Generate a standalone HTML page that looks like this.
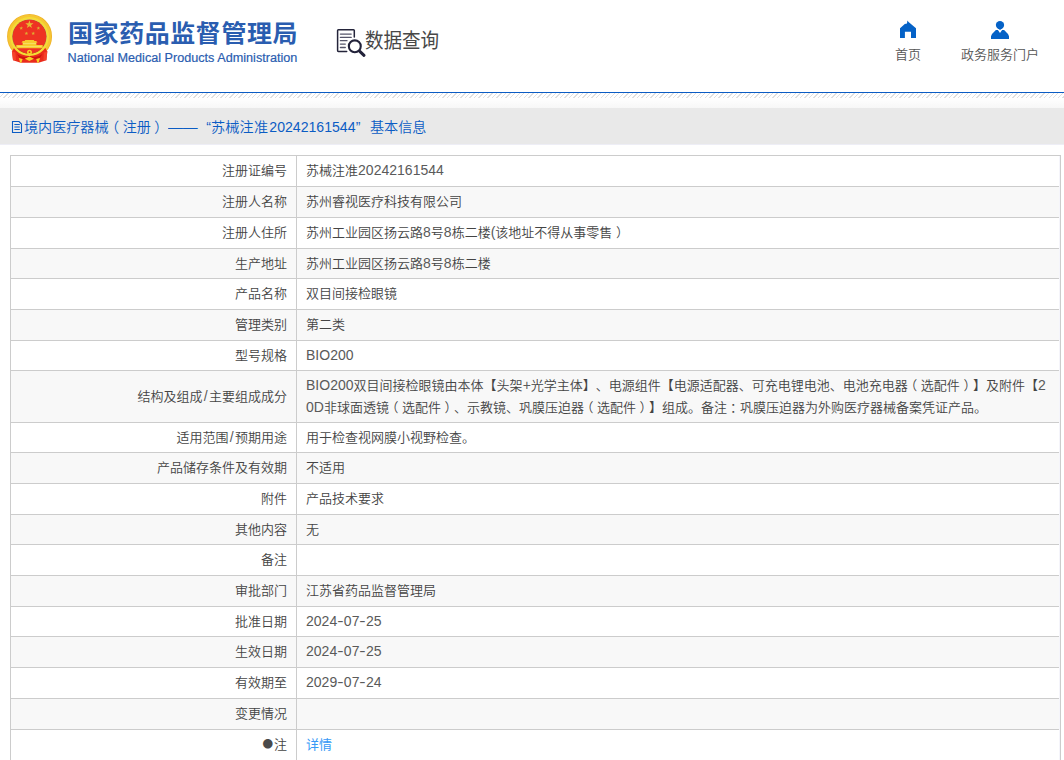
<!DOCTYPE html>
<html lang="zh-CN">
<head>
<meta charset="utf-8">
<title>国家药品监督管理局 数据查询</title>
<style>
html,body{margin:0;padding:0;background:#fff;}
body{width:1064px;height:760px;overflow:hidden;position:relative;font-family:"Liberation Sans","Noto Sans CJK SC","WenQuanYi Zen Hei",sans-serif;font-size:13px;font-weight:350;color:#444;text-spacing-trim:space-all;}
.abs{position:absolute;}
.cj{font-family:"Noto Sans CJK SC","WenQuanYi Zen Hei",sans-serif;}
#logo-cn{left:68px;top:14.3px;font-size:25px;font-weight:bold;color:#2a5db0;line-height:38px;white-space:nowrap;letter-spacing:0.57px;transform:scaleY(0.962);transform-origin:0 50%;}
#logo-en{left:67.6px;top:50.2px;font-size:12.65px;-webkit-text-stroke:0.2px #2a5db0;font-weight:400;color:#2a5db0;line-height:16px;white-space:nowrap;}
#sq{left:365px;top:25.8px;font-size:20.6px;font-weight:400;line-height:30px;color:#484848;white-space:nowrap;transform:scaleX(0.9);transform-origin:0 0;}
.nav{font-size:13px;line-height:18px;color:#555;white-space:nowrap;text-align:center;}
#hline{left:0;top:92px;width:1064px;height:1px;background:#0b5cc4;}
#stripes{left:0;top:93px;width:1064px;height:5px;background:repeating-linear-gradient(135deg,#fff 0,#fff 2.2px,#e0e0e0 2.2px,#e0e0e0 3.2px);}
#fade{left:0;top:98px;width:1064px;height:10px;background:linear-gradient(#fff,#f7f7f7);}
#bar{left:0;top:108px;width:1064px;height:36px;background:#e9e9e9;border-bottom:1px solid #eeeef6;}
#bartxt>span{position:absolute;top:117px;font-size:14.1px;line-height:20px;color:#0b5cc4;white-space:nowrap;font-weight:350;}
#tbl{left:10px;top:155px;width:1049px;border-left:1px solid #ccc;border-right:1px solid #ccc;}
.r{box-sizing:border-box;border-top:1px solid #ccc;display:flex;align-items:stretch;line-height:21.33px;background:#fff;}
.r.g{background:#f8f8f8;}
.l{box-sizing:border-box;width:286px;border-right:1px solid #ccc;text-align:right;padding-right:9px;display:flex;align-items:center;justify-content:flex-end;white-space:nowrap;}
.v{padding-left:9px;display:flex;align-items:center;white-space:nowrap;}
.v a{color:#3799f6;text-decoration:none;font-weight:400;}
.n{font-size:14px;letter-spacing:0.02px;color:#5a5a5a;}
.sl{padding:0 1.3px;}
.pl{position:relative;left:-3.5px;}
.pr{position:relative;left:3.5px;}
.h{display:inline-block;width:6.6px;text-align:center;letter-spacing:0;transform:scaleX(1.35);}
</style>
</head>
<body>
<!-- national emblem -->
<svg class="abs" style="left:0;top:0" width="64" height="70" viewBox="0 0 64 70">
  <circle cx="29.55" cy="36.4" r="20.2" fill="none" stroke="#f0b42a" stroke-width="4.6"/>
  <circle cx="29.55" cy="36.4" r="20.4" fill="none" stroke="#f6c633" stroke-width="2.4"/>
  <path fill="#ea2b1c" d="M12 51.6 L14 48 L45.4 48 L47.3 51.6 L46.4 60.3 L38.6 62.8 L20.7 62.8 L13 60.3 Z"/>
  <path fill="#f5422a" d="M12 51.6 L15.5 52.5 L16 60 L13 60.3 Z M47.3 51.6 L43.9 52.5 L43.4 60 L46.4 60.3 Z"/>
  <path fill="#cf150f" d="M17 54 Q24 59 29.7 56 Q35.4 59 42.4 54 L40 58 Q35 60.5 29.7 58 Q24.4 60.5 19.4 58 Z"/>
  <circle cx="29.5" cy="36.5" r="18.3" fill="none" stroke="#f5db36" stroke-width="2.4"/>
  <circle cx="29.45" cy="36.6" r="17.15" fill="#9c7a18"/>
  <circle cx="29.45" cy="36.6" r="16.85" fill="#ee3323"/>
  <polygon fill="#e6bb33" points="29.40,20.30 30.41,23.21 33.49,23.27 31.04,25.13 31.93,28.08 29.40,26.32 26.87,28.08 27.76,25.13 25.31,23.27 28.39,23.21"/>
  <polygon fill="#dfae30" points="21.20,26.20 21.67,27.55 23.10,27.58 21.96,28.45 22.38,29.82 21.20,29.00 20.02,29.82 20.44,28.45 19.30,27.58 20.73,27.55"/>
  <polygon fill="#dfae30" points="38.40,26.20 38.87,27.55 40.30,27.58 39.16,28.45 39.58,29.82 38.40,29.00 37.22,29.82 37.64,28.45 36.50,27.58 37.93,27.55"/>
  <polygon fill="#dfae30" points="26.40,31.40 26.87,32.75 28.30,32.78 27.16,33.65 27.58,35.02 26.40,34.20 25.22,35.02 25.64,33.65 24.50,32.78 25.93,32.75"/>
  <polygon fill="#dfae30" points="33.20,31.40 33.67,32.75 35.10,32.78 33.96,33.65 34.38,35.02 33.20,34.20 32.02,35.02 32.44,33.65 31.30,32.78 32.73,32.75"/>
  <path fill="#f7cc2e" d="M25.2 39.9 H33.8 L34.4 41 H36.2 L37.6 42.6 H36.4 V44.9 H42.7 V48.3 H16.3 V44.9 H22.6 V42.6 H21.4 L22.8 41 H24.6 Z"/>
  <path fill="#f8e273" d="M23 43.3h13v0.8H23z M17.5 46.2h24v0.7h-24z"/>
  <circle cx="29.5" cy="52.2" r="2.5" fill="#f7cf25"/>
  <circle cx="29.5" cy="52.2" r="0.9" fill="#ea2b1c"/>
  <path fill="#f7cf25" d="M24.8 58.7 L29.4 56.5 L34 58.7 L29.4 60.9 Z"/>
  <path fill="#f7cf25" d="M18.8 58 L22.6 59 L21.4 62.8 L20.2 62.8 Z M40 58 L36.2 59 L37.4 62.8 L38.6 62.8 Z"/>
</svg>
<div class="abs" id="logo-cn">国家药品监督管理局</div>
<div class="abs" id="logo-en">National Medical Products Administration</div>
<!-- search document icon -->
<svg class="abs" style="left:330px;top:20px" width="40" height="45" viewBox="330 20 40 45">
  <path d="M354.3 37 V30.6 Q354.3 29.8 353.5 29.8 H338.4 Q337.6 29.8 337.6 30.6 V50.6 Q337.6 51.4 338.4 51.4 H346.7" fill="none" stroke="#24243a" stroke-width="1.5" stroke-linecap="round"/>
  <path d="M340.4 34.1H351.2M340.4 37.4H351.2M340.4 40.7H347M340.4 44.1H345.3M340.4 47.5H345.3" stroke="#55556a" stroke-width="1.3" stroke-linecap="round" fill="none"/>
  <circle cx="354.8" cy="46.3" r="5.95" fill="#fff" stroke="#22223a" stroke-width="2.1"/>
  <path d="M359.8 51.4 L364 55.3" stroke="#22223a" stroke-width="3.1" stroke-linecap="round"/>
</svg>
<div class="abs" id="sq">数据查询</div>
<!-- home icon -->
<svg class="abs" style="left:895px;top:16px" width="26" height="26" viewBox="895 16 26 26">
  <path fill="#0562c7" d="M907.4 20.6 L908.6 22 L916 28.2 V37.9 H911 V31.8 H904.9 V37.9 H900 V28.2 L904.8 24 L907 23.6 Z"/>
</svg>
<div class="abs nav" style="left:878px;top:46.3px;width:60px;">首页</div>
<!-- person icon -->
<svg class="abs" style="left:985px;top:16px" width="30" height="26" viewBox="985 16 30 26">
  <circle cx="1000" cy="25.1" r="4.15" fill="#0562c7"/>
  <path fill="#0562c7" d="M998 28.3 L1000 30 L1002 28.3 Z"/>
  <path fill="#0562c7" d="M995.9 30 H997.9 L1000 33.1 L1002.1 30 H1004.1 L1008 34 L1009 36.2 V38.9 H991 V36.2 L992 34 Z"/>
</svg>
<div class="abs nav" style="left:950px;top:46.3px;width:100px;">政务服务门户</div>
<div class="abs" id="hline"></div>
<div class="abs" id="stripes"></div>
<div class="abs" id="fade"></div>
<div class="abs" id="bar"></div>
<!-- document icon in bar -->
<svg class="abs" style="left:10px;top:118px" width="14" height="18" viewBox="10 118 14 18">
  <path d="M12.5 121.5 H19 L21.5 124 V132.5 H12.5 Z" fill="none" stroke="#0b5cc4" stroke-width="1.1"/>
  <path d="M14.4 124.5h5.4M14.4 127h5.4M14.4 129.5h5.4" stroke="#0b5cc4" stroke-width="1" fill="none"/>
</svg>
<div id="bartxt">
<span style="left:24px">境内医疗器械<span class="pl">（</span>注册<span class="pr">）</span></span>
<span style="left:168.3px;transform:scaleX(1.055);transform-origin:0 0">——</span>
<span style="left:206.2px">“</span>
<span style="left:211px;letter-spacing:0.2px">苏械注准</span>
<span style="left:269.3px">20242161544</span>
<span style="left:355.8px">”</span>
<span style="left:370px">基本信息</span>
</div>
<div class="abs" id="tbl">
<div class="r" style="height:31px"><div class="l">注册证编号</div><div class="v">苏械注准<span class="n">20242161544</span></div></div>
<div class="r g" style="height:31px"><div class="l">注册人名称</div><div class="v">苏州睿视医疗科技有限公司</div></div>
<div class="r" style="height:31px"><div class="l">注册人住所</div><div class="v">苏州工业园区扬云路<span class="n">8</span>号<span class="n">8</span>栋二楼<span class="n">(</span>该地址不得从事零售<span class="pr">）</span></div></div>
<div class="r g" style="height:30px"><div class="l">生产地址</div><div class="v">苏州工业园区扬云路<span class="n">8</span>号<span class="n">8</span>栋二楼</div></div>
<div class="r" style="height:31px"><div class="l">产品名称</div><div class="v">双目间接检眼镜</div></div>
<div class="r g" style="height:31px"><div class="l">管理类别</div><div class="v">第二类</div></div>
<div class="r" style="height:30px"><div class="l">型号规格</div><div class="v"><span class="n">BIO200</span></div></div>
<div class="r g" style="height:52px"><div class="l">结构及组成<span class="n sl">/</span>主要组成成分</div><div class="v"><span><span class="n">BIO200</span>双目间接检眼镜由本体【头架<span class="n">+</span>光学主体】、电源组件【电源适配器、可充电锂电池、电池充电器<span class="pl">（</span>选配件<span class="pr">）</span>】及附件【<span class="n">2</span><br><span class="n">0D</span>非球面透镜<span class="pl">（</span>选配件<span class="pr">）</span>、示教镜、巩膜压迫器<span class="pl">（</span>选配件<span class="pr">）</span>】组成。备注<span class="pr" style="left:2.8px">：</span>巩膜压迫器为外购医疗器械备案凭证产品。</span></div></div>
<div class="r" style="height:30px"><div class="l">适用范围<span class="n sl">/</span>预期用途</div><div class="v">用于检查视网膜小视野检查。</div></div>
<div class="r g" style="height:31px"><div class="l">产品储存条件及有效期</div><div class="v">不适用</div></div>
<div class="r" style="height:31px"><div class="l">附件</div><div class="v">产品技术要求</div></div>
<div class="r g" style="height:30px"><div class="l">其他内容</div><div class="v">无</div></div>
<div class="r" style="height:31px"><div class="l">备注</div><div class="v"></div></div>
<div class="r g" style="height:31px"><div class="l">审批部门</div><div class="v">江苏省药品监督管理局</div></div>
<div class="r" style="height:30px"><div class="l">批准日期</div><div class="v"><span class="n">2024<span class="h">-</span>07<span class="h">-</span>25</span></div></div>
<div class="r g" style="height:31px"><div class="l">生效日期</div><div class="v"><span class="n">2024<span class="h">-</span>07<span class="h">-</span>25</span></div></div>
<div class="r" style="height:31px"><div class="l">有效期至</div><div class="v"><span class="n">2029<span class="h">-</span>07<span class="h">-</span>24</span></div></div>
<div class="r g" style="height:31px"><div class="l">变更情况</div><div class="v"></div></div>
<div class="r" style="height:31px"><div class="l"><span class="cj" style="font-size:10.6px;position:relative;top:-0.9px;left:-1px;color:#4a4a4a">●</span>注</div><div class="v"><a>详情</a></div></div>
<div class="abs" style="right:0;top:1px;width:1px;height:800px;background:#f5f5fb"></div>
</div>
</body>
</html>
